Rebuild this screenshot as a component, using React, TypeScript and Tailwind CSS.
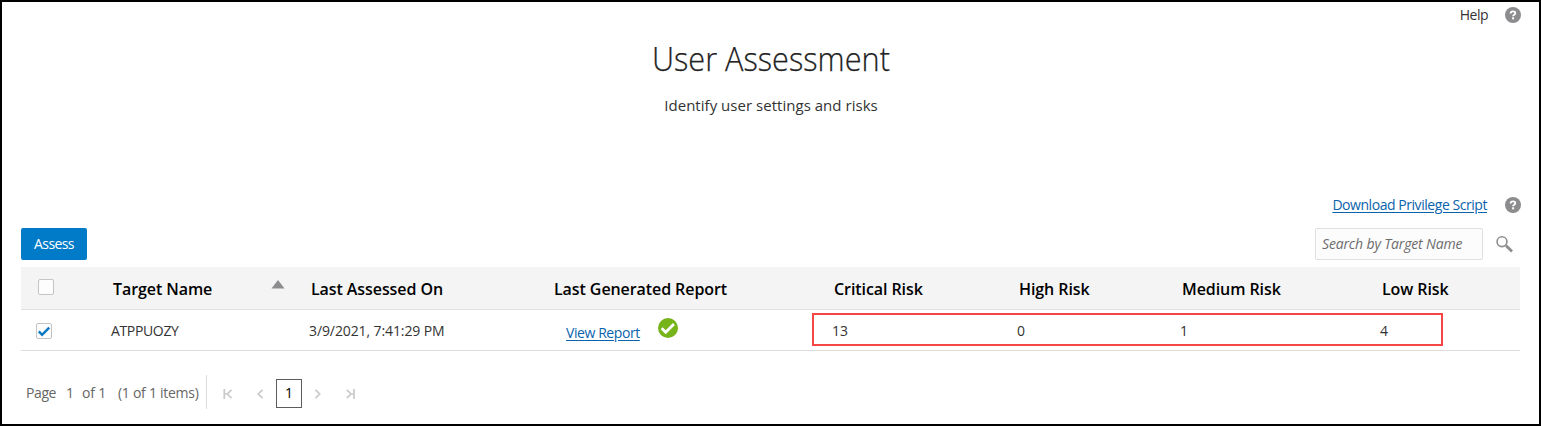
import React from 'react';

function HelpIcon() {
  return (
    <svg width="16" height="16" viewBox="0 0 16 16" aria-hidden="true">
      <circle cx="8" cy="8" r="8" fill="#8c8c8e" />
      <path d="M5.6 6.4C5.6 4.9 6.6 4.3 8 4.3s2.3.7 2.3 1.9c0 1.5-2.2 1.5-2.2 3.1" fill="none" stroke="#fff" strokeWidth="1.8" />
      <rect x="7.1" y="10.3" width="2" height="2" fill="#fff" />
    </svg>
  );
}

function SearchIcon() {
  return (
    <svg width="18" height="18" viewBox="0 0 18 18" aria-hidden="true">
      <circle cx="6" cy="6.7" r="4.9" fill="none" stroke="#8c8c8e" strokeWidth="1.6" />
      <path d="M9.4 10.1l1.8 1.8" stroke="#8c8c8e" strokeWidth="1.6" />
      <path d="M10.4 10.9l5.6 5.5" stroke="#8c8c8e" strokeWidth="2.8" />
    </svg>
  );
}

function Checkbox({ checked = false }: { checked?: boolean }) {
  return (
    <span className="flex h-4 w-4 items-center justify-center rounded-xs border border-[#c4c4c4] bg-[#fdfdfd]">
      {checked && (
        <svg width="14" height="14" viewBox="0 0 14 14" className="shrink-0">
          <path d="M1.8 7.4l3.3 3.4 7.1-7.1" fill="none" stroke="#0a78c2" strokeWidth="2.5" />
        </svg>
      )}
    </span>
  );
}

function PagerIcon({ d }: { d: string }) {
  return (
    <svg width="10" height="10" viewBox="0 0 10 10" fill="none" stroke="#c9c9cb" strokeWidth="1.7" aria-hidden="true">
      <path d={d} />
    </svg>
  );
}

const columns = 'grid grid-cols-[92px_198px_243px_280px_185px_163px_200px_138px]';

export default function App() {
  return (
    <div className="flex h-[426px] w-[1541px] flex-col overflow-hidden border-2 border-black bg-white pr-[18px] pl-[19px] font-['Open_Sans','Noto_Sans',sans-serif] text-[14px] leading-5 whitespace-nowrap text-[#333]">
      <div className="flex h-[26px] items-center justify-end">
        <span className="mr-[17px] tracking-[-0.5px]">Help</span>
        <HelpIcon />
      </div>

      <header className="flex h-[168px] flex-col items-center">
        <h1 className="mt-[9px] scale-x-[0.93] text-[33px] leading-[44px] font-light text-[#222] [-webkit-text-stroke:0.25px_#222]">User Assessment</h1>
        <p className="mt-[14px] text-[15px] leading-5 tracking-[0.03px]">Identify user settings and risks</p>
      </header>

      <div className="mt-px flex h-4 items-center justify-end">
        <a className="mr-[18px] tracking-[-0.45px] text-[#0a63ac] underline underline-offset-2">Download Privilege Script</a>
        <HelpIcon />
      </div>

      <div className="mt-[15px] flex h-8 justify-between">
        <button className="h-8 w-[66px] rounded-xs bg-[#017bc8] tracking-[-0.6px] text-white">Assess</button>
        <div className="flex items-center">
          <div className="mr-[13px] flex h-8 w-[168px] items-center rounded-xs border border-[#dfdfdf] bg-[#fcfcfc] pl-[6px] tracking-[-0.15px] text-[#6c6c6c] italic">
            Search by Target Name
          </div>
          <SearchIcon />
          <span className="w-[7px]" />
        </div>
      </div>

      <section className="relative mt-[7px] w-[1499px]">
        <div className={`${columns} h-[43px] items-center border-b border-[#e0e0e0] bg-[#f4f4f4] text-[16px] font-semibold tracking-[-0.08px] text-black`}>
          <div className="pl-[17px] pb-[3px]"><Checkbox /></div>
          <div className="flex items-center justify-between pt-[2px] pr-[26px]">
            <span>Target Name</span>
            <svg width="14" height="9" viewBox="0 0 14 9" className="mb-[9px]"><path d="M7 0l6.5 8.5H.5z" fill="#8c8c8e" /></svg>
          </div>
          <span className="pt-[2px]">Last Assessed On</span>
          <span className="pt-[2px]">Last Generated Report</span>
          <span className="pt-[2px]">Critical Risk</span>
          <span className="pt-[2px]">High Risk</span>
          <span className="pt-[2px]">Medium Risk</span>
          <span className="pt-[2px]">Low Risk</span>
        </div>
        <div className={`${columns} h-[41px] items-center border-b border-[#dedede]`}>
          <div className="pt-[2px] pl-[15px]"><Checkbox checked /></div>
          <span className="-ml-[2px] pt-[2px] tracking-[-0.35px]">ATPPUOZY</span>
          <span className="-ml-[2px] pt-[2px] tracking-[-0.1px]">3/9/2021, 7:41:29 PM</span>
          <div className="flex items-center pl-3">
            <a className="mt-[5px] w-[92px] tracking-[-0.42px] text-[#0a63ac] underline underline-offset-2">View Report</a>
            <svg width="20" height="20" viewBox="0 0 20 20" className="mb-[5px]">
              <circle cx="10" cy="10" r="10" fill="#76b41a" />
              <path d="M3.7 10.2l4 4.1 8.3-8.4" fill="none" stroke="#fff" strokeWidth="2.8" />
            </svg>
          </div>
          <span className="-ml-[2px] pt-[2px]">13</span>
          <span className="-ml-[2px] pt-[2px]">0</span>
          <span className="-ml-[2px] pt-[2px]">1</span>
          <span className="-ml-[2px] pt-[2px]">4</span>
        </div>
        <div className="absolute top-[46px] left-[791px] h-[33px] w-[631px] border-2 border-[#f54545]" />
      </section>

      <nav className="mt-6 flex h-[34px] items-center text-[#666]">
        <span className="ml-[5px] w-10 pt-[2px] tracking-[-0.4px]">Page</span>
        <span className="w-4 pt-[2px]">1</span>
        <span className="w-9 pt-[2px] tracking-[-0.2px]">of 1</span>
        <span className="w-[88px] pt-[2px] tracking-[-0.27px]">(1 of 1 items)</span>
        <span className="h-[34px] w-px bg-[#dcdcdc]" />
        <div className="ml-[16px] flex w-[53px] items-center justify-between pt-[3px] pr-[11px]">
          <PagerIcon d="M1.3 0v10M8.5.8L4.3 5l4.2 4.2M1.5 5h3" />
          <PagerIcon d="M7.5.8L3.3 5l4.2 4.2" />
        </div>
        <span className="mt-[2px] flex h-[29px] w-[26px] items-center justify-center border border-[#5c5c5c] text-black">1</span>
        <div className="ml-[11px] flex w-[43px] items-center justify-between pt-[3px]">
          <PagerIcon d="M2.5.8L6.7 5 2.5 9.2" />
          <PagerIcon d="M8 0v10M.8.8L5 5 .8 9.2M5 5h3" />
        </div>
      </nav>
    </div>
  );
}
